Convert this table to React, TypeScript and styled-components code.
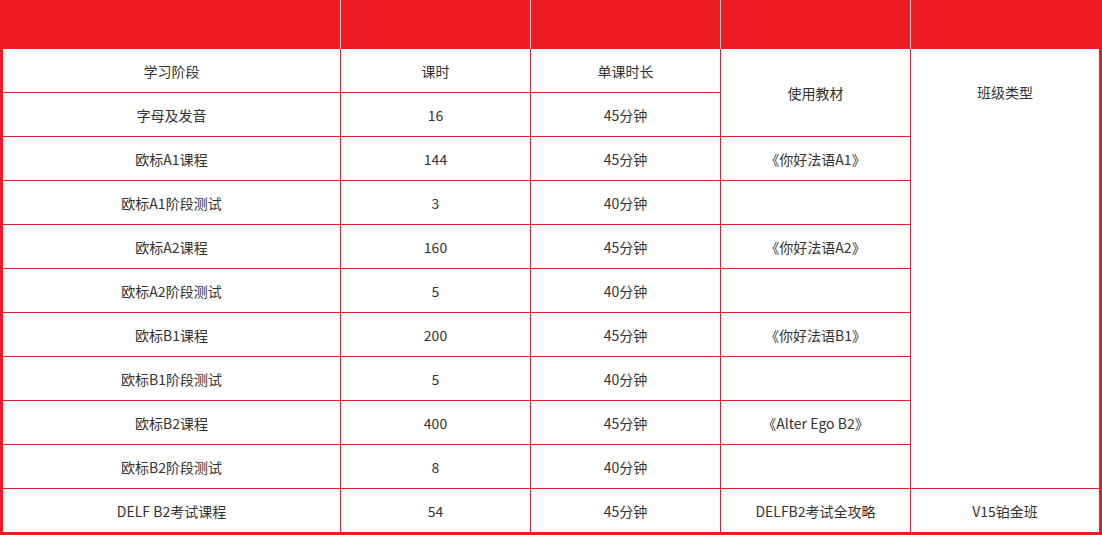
import React from 'react';
import styled, { createGlobalStyle } from 'styled-components';

const GlobalStyle = createGlobalStyle`
  html, body {
    margin: 0;
    padding: 0;
    background: #fff;
  }
  body {
    font-family: 'Noto Sans CJK SC', 'Noto Sans', sans-serif;
  }
`;

const Table = styled.table`
  width: 1102px;
  table-layout: fixed;
  border-collapse: separate;
  border-spacing: 0;
  border: 3px solid #ed1c24;
  border-top: 0;
  font-size: 14px;
  color: #333;
`;

const HeadRow = styled.tr`
  height: 49px;
  background: #ed1c24;
`;

const HeadCell = styled.th<{ $last?: boolean }>`
  padding: 0;
  border-right: ${p => (p.$last ? '0' : '1px solid #f6c6c8')};
`;

const Row = styled.tr<{ $short?: boolean }>`
  height: ${p => (p.$short ? '43px' : '44px')};
`;

const Cell = styled.td<{ $last?: boolean; $bottom?: boolean; $top?: boolean }>`
  padding: ${p => (p.$top ? '33px 0 0' : '0')};
  text-align: center;
  vertical-align: ${p => (p.$top ? 'top' : 'middle')};
  line-height: 20px;
  border-right: ${p => (p.$last ? '0' : '1px solid #dc2032')};
  border-bottom: ${p => (p.$bottom ? '0' : '1px solid #dc2032')};
`;

type Course = {
  stage: string;
  hours: string;
  length: string;
  book?: string;
};

const courses: Course[] = [
  { stage: '字母及发音', hours: '16', length: '45分钟' },
  { stage: '欧标A1课程', hours: '144', length: '45分钟', book: '《你好法语A1》' },
  { stage: '欧标A1阶段测试', hours: '3', length: '40分钟', book: '' },
  { stage: '欧标A2课程', hours: '160', length: '45分钟', book: '《你好法语A2》' },
  { stage: '欧标A2阶段测试', hours: '5', length: '40分钟', book: '' },
  { stage: '欧标B1课程', hours: '200', length: '45分钟', book: '《你好法语B1》' },
  { stage: '欧标B1阶段测试', hours: '5', length: '40分钟', book: '' },
  { stage: '欧标B2课程', hours: '400', length: '45分钟', book: '《Alter Ego B2》' },
  { stage: '欧标B2阶段测试', hours: '8', length: '40分钟', book: '' },
];

const App: React.FC = () => {
  return (
    <>
      <GlobalStyle />
      <Table>
        <colgroup>
          <col style={{ width: 338 }} />
          <col style={{ width: 190 }} />
          <col style={{ width: 190 }} />
          <col style={{ width: 190 }} />
          <col style={{ width: 188 }} />
        </colgroup>
        <thead>
          <HeadRow>
            <HeadCell />
            <HeadCell />
            <HeadCell />
            <HeadCell />
            <HeadCell $last />
          </HeadRow>
        </thead>
        <tbody>
          <Row>
            <Cell>学习阶段</Cell>
            <Cell>课时</Cell>
            <Cell>单课时长</Cell>
            <Cell rowSpan={2}>使用教材</Cell>
            <Cell rowSpan={10} $last $top>
              班级类型
            </Cell>
          </Row>
          {courses.map(c => (
            <Row key={c.stage}>
              <Cell>{c.stage}</Cell>
              <Cell>{c.hours}</Cell>
              <Cell>{c.length}</Cell>
              {c.book !== undefined && <Cell>{c.book}</Cell>}
            </Row>
          ))}
          <Row $short>
            <Cell $bottom>DELF B2考试课程</Cell>
            <Cell $bottom>54</Cell>
            <Cell $bottom>45分钟</Cell>
            <Cell $bottom>DELFB2考试全攻略</Cell>
            <Cell $bottom $last>
              V15铂金班
            </Cell>
          </Row>
        </tbody>
      </Table>
    </>
  );
};

export default App;
